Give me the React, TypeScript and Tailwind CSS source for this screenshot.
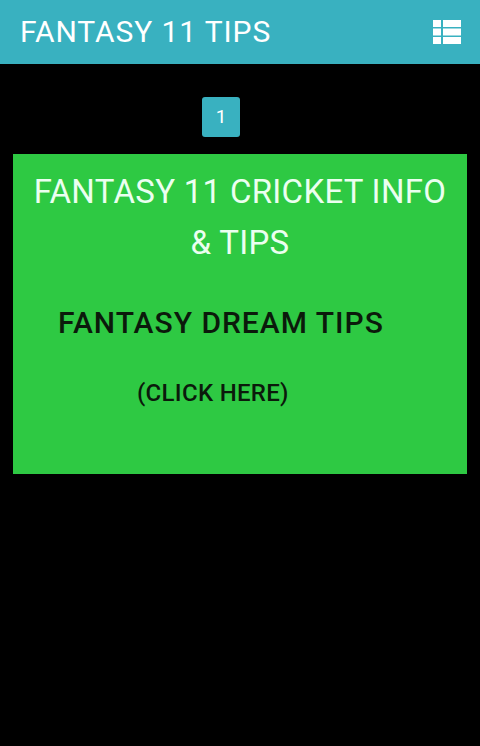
import React from 'react';

function ListIcon() {
  return (
    <svg width="28" height="24" viewBox="0 0 28 24" fill="#ffffff">
      <rect x="0" y="0" width="8" height="7" />
      <rect x="10" y="0" width="18" height="7" />
      <rect x="0" y="8.5" width="8" height="7" />
      <rect x="10" y="8.5" width="18" height="7" />
      <rect x="0" y="17" width="8" height="7" />
      <rect x="10" y="17" width="18" height="7" />
    </svg>
  );
}

export default function App() {
  return (
    <div className="w-[480px] h-[746px] bg-black overflow-hidden" style={{ fontFamily: 'Roboto, "Liberation Sans", sans-serif' }}>
      {/* top bar */}
      <div className="h-16 bg-[#39b1c0] flex items-center justify-between pl-5 pr-[19px]">
        <span className="text-white text-[30px] tracking-[0.9px] leading-none">FANTASY 11 TIPS</span>
        <ListIcon />
      </div>

      {/* pager */}
      <div className="pt-[33px] pl-[202px]">
        <div className="w-[38px] h-10 rounded-[3px] bg-[#39b1c0] text-white text-[19px] flex items-center justify-center">
          1
        </div>
      </div>

      {/* banner */}
      <div className="mt-[17px] mx-[13px] h-80 bg-[#2ec943] pt-[12px]">
        <div className="text-center text-[#ebfff0] text-[33px] tracking-[0.3px] leading-[51px]">
          FANTASY 11 CRICKET INFO
          <br />
          &amp; TIPS
        </div>
        <div className="mt-[40px] pl-[45px] text-[#0b1a0b] text-[30px] tracking-[1px] font-medium leading-none">
          FANTASY DREAM TIPS
        </div>
        <div className="mt-[43px] pl-[124px] text-[#0b1a0b] text-[24px] tracking-[0.3px] font-medium leading-none">
          (CLICK HERE)
        </div>
      </div>
    </div>
  );
}
